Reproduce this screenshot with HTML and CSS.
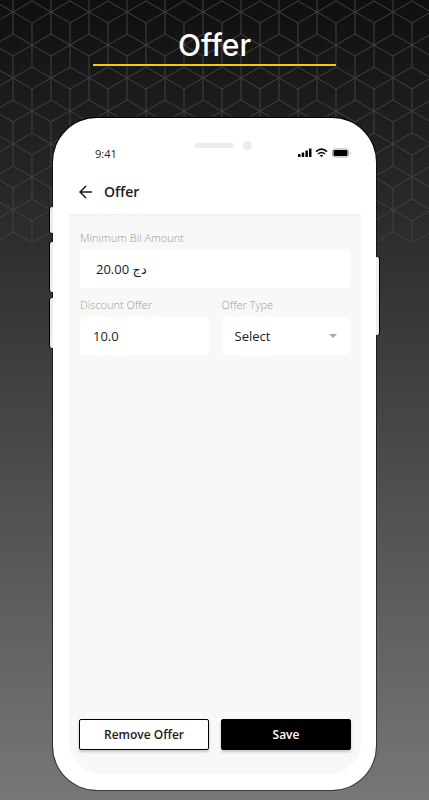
FILE: index.html
```html
<!DOCTYPE html>
<html lang="en">
<head>

  <meta charset="utf-8">
  <meta name="viewport" content="width=device-width, initial-scale=1">
  <title>Offer</title>

  <link rel="stylesheet" href="styles.css">

</head>
<body>

  <!-- cube pattern behind the title -->
  <svg class="cubes" aria-hidden="true">
    <defs>
      <pattern id="cube" x="13" y="1" width="38" height="66" patternUnits="userSpaceOnUse">
        <path d="M0 11 L19 0 L38 11 L19 22 Z M-19 44 L0 33 L19 44 L0 55 Z M19 44 L38 33 L57 44 L38 55 Z M19 22 V66" />
        <path d="M0 0 V33 M38 0 V33 M0 55 V66 M38 55 V66" />
      </pattern>
    </defs>
    <rect width="100%" height="100%" fill="url(#cube)" />
  </svg>

  <h1 class="title">Offer</h1>

  <main class="phone">
    <i class="key key-mute"></i>
    <i class="key key-up"></i>
    <i class="key key-down"></i>
    <i class="key key-power"></i>

    <div class="status">
      <time class="clock">9:41</time>
      <div class="notch"><i class="speaker"></i><i class="camera"></i></div>
      <svg class="signals" width="54" height="10" viewBox="0 0 54 10" aria-hidden="true">
        <rect x="0" y="6" width="2.5" height="3" rx=".6" />
        <rect x="3.7" y="4.5" width="2.5" height="4.5" rx=".6" />
        <rect x="7.4" y="2.5" width="2.5" height="6.5" rx=".6" />
        <rect x="11" y="0.5" width="2.5" height="8.5" rx=".6" />
        <path class="wave" d="M18 3.6 Q23.5 -1.2 29 3.6 M20 6 Q23.5 3 27 6" />
        <path d="M21.8 7.3 Q23.5 6 25.2 7.3 L23.5 9.2 Z" />
        <rect class="shell" x="34.5" y="1" width="16" height="8" rx="2" />
        <rect x="35.5" y="2" width="14" height="6" rx="1" />
        <path class="tip" d="M52 3.5 Q53.6 5 52 6.5 Z" />
      </svg>
    </div>

    <header class="bar">
      <button class="back" type="button" aria-label="Back">
        <svg width="14" height="14" viewBox="0 0 14 14" aria-hidden="true">
          <path d="M13 7 H1.2 M7 1 L1 7 L7 13" />
        </svg>
      </button>
      <h2>Offer</h2>
    </header>

    <form class="screen">
      <div class="fields">
        <div class="field wide">
          <label for="minimum">Minimum Bil Amount</label>
          <input class="amount" id="minimum" type="text" value="20.00 دج">
        </div>
        <div class="field">
          <label for="discount">Discount Offer</label>
          <input id="discount" type="text" value="10.0">
        </div>
        <div class="field">
          <label for="type">Offer Type</label>
          <div class="select">
            <select id="type">
              <option>Select</option>
            </select>
          </div>
        </div>
      </div>

      <div class="actions">
        <button type="button">Remove Offer</button>
        <button class="save" type="submit">Save</button>
      </div>
    </form>
  </main>

</body>
</html>
```

FILE: styles.css
```css
* {
  margin: 0;
  padding: 0;
  box-sizing: border-box;
}

:root {
  --black: #000;
  --ink: #1c1c1c;
  --label: #999;
  --light-gray: #ededed;
  --screen: #f8f8f8;
  --yellow: #f5cb05;
}

body {
  display: flex;
  flex-direction: column;
  position: relative;
  min-height: 100vh;
  padding: 24px 53px 10px;
  background: linear-gradient(#0f0f0f, #777);
  color: var(--ink);
  font-family: "Open Sans", "Noto Sans", "DejaVu Sans", sans-serif;
  font-size: 13px;
  line-height: 16px;
}

button,
input,
select {
  font: inherit;
  color: inherit;
  border: 0;
}

button {
  cursor: pointer;
}

.cubes {
  position: absolute;
  top: 0;
  left: 0;
  width: 100%;
  height: 242px;
}
.cubes path {
  fill: none;
  stroke: #404040;
}

.title {
  position: relative;
  width: 75%;
  margin: 0 auto 52px;
  padding-top: 2px;
  border-bottom: 2px solid var(--yellow);
  color: #fff;
  font-family: Inter, sans-serif;
  font-size: 30px;
  font-weight: 500;
  line-height: 38px;
  text-align: center;
}

.phone {
  display: flex;
  flex: 1;
  flex-direction: column;
  position: relative;
  padding: 0 15px 16px 16px;
  border-radius: 44px;
  background: #fff;
  box-shadow: 0 0 0 1px rgba(0, 0, 0, 0.5), 0 -1px 1px var(--black);
}

.key {
  position: absolute;
  left: -3px;
  width: 3px;
  height: 50px;
  border-radius: 2px 0 0 2px;
  background: var(--light-gray);
  box-shadow: -1px 0 0 var(--black);
}
.key-mute {
  top: 89px;
  height: 26px;
}
.key-up {
  top: 124px;
}
.key-down {
  top: 180px;
}
.key-power {
  top: 139px;
  right: -3px;
  left: auto;
  height: 78px;
  border-radius: 0 2px 2px 0;
  box-shadow: 1px 0 0 var(--black);
}

.status {
  display: grid;
  grid-template-columns: 1fr auto 1fr;
  align-items: end;
  height: 44px;
  padding: 0 9px 0 26px;
}
.clock {
  font-size: 11px;
}
.notch {
  display: flex;
  align-items: center;
  gap: 9px;
  align-self: center;
  padding-top: 11px;
}
.speaker {
  width: 39px;
  height: 5px;
  border-radius: 3px;
  background: var(--light-gray);
}
.camera {
  width: 9px;
  height: 9px;
  border-radius: 50%;
  background: var(--light-gray);
}
.signals {
  justify-self: end;
  margin-bottom: 4px;
}
.signals .wave {
  fill: none;
  stroke: #000;
  stroke-width: 1.6;
}
.signals .shell {
  fill: #fff;
  stroke: #aaa;
}
.signals .tip {
  fill: #888;
}

.bar {
  display: flex;
  align-items: center;
  gap: 11px;
  position: relative;
  height: 52px;
  padding: 8px 10px 0;
  box-shadow: 0 2px 2px -1px rgba(0, 0, 0, 0.06);
}
.bar h2 {
  font-size: 14px;
  font-weight: 600;
}
.back {
  display: flex;
  background: none;
}
.back svg {
  fill: none;
  stroke: var(--ink);
  stroke-width: 1.5;
}

.screen {
  display: flex;
  flex: 1;
  flex-direction: column;
  justify-content: space-between;
  padding: 16px 10px 24px;
  border-radius: 0 0 32px 32px;
  background: var(--screen);
}

.fields {
  display: grid;
  grid-template-columns: 1fr 1fr;
  gap: 9px 13px;
  padding: 0 1px;
}
.wide {
  grid-column: 1 / -1;
}
.field label {
  display: block;
  margin-bottom: 4px;
  color: var(--label);
  font-size: 11px;
  font-weight: 300;
}
.field input,
.field select {
  display: block;
  width: 100%;
  height: 38px;
  padding: 0 13px;
  border-radius: 2px;
  background: #fff;
  appearance: none;
}
.field .amount {
  padding-left: 16px;
}
.select {
  position: relative;
}
.select::after {
  content: "";
  position: absolute;
  top: 17px;
  right: 13px;
  border: 4px solid transparent;
  border-top-color: #aaa;
  pointer-events: none;
}

.actions {
  display: grid;
  grid-template-columns: 1fr 1fr;
  gap: 12px;
}
.actions button {
  height: 31px;
  border: 1px solid var(--black);
  border-radius: 2px;
  background: #fff;
  box-shadow: 0 2px 3px rgba(0, 0, 0, 0.2);
  font-size: 12px;
  font-weight: 600;
}
.actions .save {
  background: var(--black);
  color: #fff;
}
```
